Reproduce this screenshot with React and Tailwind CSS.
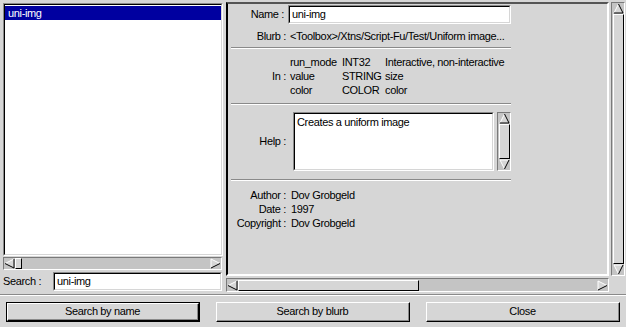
import React from 'react';

// sunken 2px bevel, used by the list, entries and the text view
function Sunken({ className = '', children }) {
  return (
    <div className={'border border-t-[#8a8a8a] border-l-[#8a8a8a] border-b-white border-r-white ' + className}>
      <div className="w-full h-full border border-t-black border-l-black border-b-[#d6d6d6] border-r-[#d6d6d6] bg-white overflow-hidden">
        {children}
      </div>
    </div>
  );
}

function Arrow({ dir }) {
  if (dir === 'up')
    return (
      <svg width="11" height="11" viewBox="0 0 11 11" className="block">
        <polygon points="5.5,1 10,10 1,10" fill="#d6d6d6" />
        <path d="M1 10 L5.5 1" stroke="#fff" strokeWidth="1" fill="none" />
        <path d="M5.5 1 L10 10 L1 10" stroke="#000" strokeWidth="1" fill="none" />
      </svg>
    );
  if (dir === 'down')
    return (
      <svg width="11" height="11" viewBox="0 0 11 11" className="block">
        <polygon points="1,1 10,1 5.5,10" fill="#d6d6d6" />
        <path d="M5.5 10 L1 1 L10 1" stroke="#fff" strokeWidth="1" fill="none" />
        <path d="M10 1 L5.5 10" stroke="#000" strokeWidth="1" fill="none" />
      </svg>
    );
  if (dir === 'left')
    return (
      <svg width="11" height="11" viewBox="0 0 11 11" className="block">
        <polygon points="1,5.5 10,1 10,10" fill="#d6d6d6" />
        <path d="M10 1 L1 5.5" stroke="#fff" strokeWidth="1" fill="none" />
        <path d="M1 5.5 L10 10 L10 1" stroke="#000" strokeWidth="1" fill="none" />
      </svg>
    );
  return (
    <svg width="11" height="11" viewBox="0 0 11 11" className="block">
      <polygon points="1,1 10,5.5 1,10" fill="#d6d6d6" />
      <path d="M1 10 L1 1 L10 5.5" stroke="#fff" strokeWidth="1" fill="none" />
      <path d="M10 5.5 L1 10" stroke="#000" strokeWidth="1" fill="none" />
    </svg>
  );
}

function Slider({ className = '' }) {
  return <div className={'bg-[#d6d6d6] border border-t-white border-l-white border-b-black border-r-black ' + className} />;
}

function HScroll({ className = '', thumb }) {
  return (
    <div className={'flex items-center bg-[#c4c4c4] border border-t-[#7a7a7a] border-l-[#7a7a7a] border-b-white border-r-white ' + className}>
      <Arrow dir="left" />
      {thumb}
      <div className="flex-1" />
      <Arrow dir="right" />
    </div>
  );
}

function VScroll({ className = '', children }) {
  return (
    <div className={'flex flex-col items-center bg-[#c4c4c4] border border-t-[#7a7a7a] border-l-[#7a7a7a] border-b-white border-r-white ' + className}>
      <Arrow dir="up" />
      {children}
      <Arrow dir="down" />
    </div>
  );
}

function Etch() {
  return <div className="h-[2px] border-t border-t-[#8a8a8a] border-b border-b-white" />;
}

function Button({ label, isDefault }) {
  return (
    <div className={isDefault ? 'w-[194px] h-[20px] border border-black' : 'w-[194px] h-[20px]'}>
      <div className="w-full h-full border border-t-white border-l-white border-b-black border-r-black">
        <div className="w-full h-full flex items-center justify-center border-b border-r border-b-[#8a8a8a] border-r-[#8a8a8a]">
          {label}
        </div>
      </div>
    </div>
  );
}

export default function App() {
  return (
    <div className="w-[626px] h-[327px] bg-[#d6d6d6] overflow-hidden flex flex-col font-['Liberation_Sans',Arial,sans-serif] text-[11px] tracking-[-0.35px] text-black leading-none">
      <div className="flex h-[294px]">
        {/* procedure list */}
        <div className="w-[223px] pl-[3px] pt-[3px] flex flex-col">
          <Sunken className="w-[220px] h-[253px]">
            <div className="h-[14px] bg-[#0000a0] text-white flex items-center pl-[3px] mt-[1px]">uni-img</div>
          </Sunken>
          <HScroll className="w-[219px] h-[13px] mt-[1px]" thumb={<Slider className="w-[7px] h-[11px]" />} />
          <div className="flex items-center mt-[2px]">
            <span className="w-[50px]">Search :</span>
            <Sunken className="w-[169px] h-[19px]">
              <div className="h-full flex items-center pl-[2px]">uni-img</div>
            </Sunken>
          </div>
        </div>

        <div className="w-[3px]" />

        {/* procedure details */}
        <div className="flex flex-col pt-[2px]">
          <div className="flex">
            <div className="w-[383px] h-[274px] border-2 border-t-[#555] border-l-black border-b-white border-r-white pl-[3px] pt-[1px]">
              <div className="w-[280px] flex flex-col">
                <div className="flex items-center gap-[4px]">
                  <span className="w-[55px] text-right">Name :</span>
                  <Sunken className="w-[223px] h-[19px] shrink-0">
                    <div className="h-full flex items-center pl-[2px]">uni-img</div>
                  </Sunken>
                </div>
                <div className="flex items-center gap-[4px] h-[23px] pt-[1px]">
                  <span className="w-[55px] text-right">Blurb :</span>
                  <span className="whitespace-nowrap">&lt;Toolbox&gt;/Xtns/Script-Fu/Test/Uniform image...</span>
                </div>
                <Etch />
                <div className="flex items-center gap-[4px] pt-[6px] pb-[6px]">
                  <span className="w-[55px] text-right">In :</span>
                  <div className="grid grid-cols-[52px_43px_1fr] auto-rows-[14px] items-center whitespace-nowrap">
                    <span>run_mode</span><span>INT32</span><span>Interactive, non-interactive</span>
                    <span>value</span><span>STRING</span><span>size</span>
                    <span>color</span><span>COLOR</span><span>color</span>
                  </div>
                </div>
                <Etch />
                <div className="flex items-center pt-[7px] pb-[8px]">
                  <span className="w-[55px] text-right">Help :</span>
                  <Sunken className="w-[201px] h-[59px] ml-[7px] shrink-0">
                    <div className="pl-[2px] pt-[3px]">Creates a uniform image</div>
                  </Sunken>
                  <VScroll className="w-[14px] h-[59px] ml-[3px] shrink-0">
                    <Slider className="w-[11px] flex-1" />
                  </VScroll>
                </div>
                <Etch />
                <div className="grid grid-cols-[55px_1fr] gap-x-[5px] auto-rows-[14px] items-center pt-[7px]">
                  <span className="text-right">Author :</span><span>Dov Grobgeld</span>
                  <span className="text-right">Date :</span><span>1997</span>
                  <span className="text-right">Copyright :</span><span>Dov Grobgeld</span>
                </div>
              </div>
            </div>
            <VScroll className="w-[14px] h-[274px] ml-[2px]">
              <Slider className="w-[11px] flex-1" />
            </VScroll>
          </div>
          <HScroll className="w-[383px] h-[14px] mt-[2px]" thumb={<Slider className="flex-1 h-[11px]" />} />
        </div>
      </div>

      <Etch />

      <div className="flex gap-[16px] pl-[6px] pt-[6px]">
        <Button label="Search by name" isDefault />
        <Button label="Search by blurb" />
        <Button label="Close" />
      </div>
    </div>
  );
}
